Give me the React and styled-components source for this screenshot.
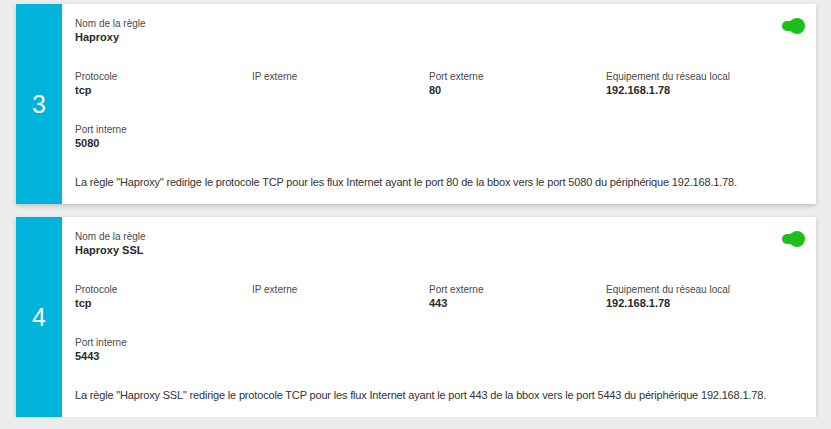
import React from "react";
import styled, { createGlobalStyle } from "styled-components";

const GlobalStyle = createGlobalStyle`
  body {
    margin: 0;
    background-color: #ececec;
    font-family: "Liberation Sans", Arial, sans-serif;
  }
`;

const Page = styled.div`
  padding: 4px 15px 0 16px;
  display: flex;
  flex-direction: column;
  gap: 13px;
`;

const Card = styled.div`
  position: relative;
  display: flex;
  width: 800px;
  min-height: 200px;
  background-color: #fff;
  box-shadow: 0 2px 4px rgba(0, 0, 0, 0.18);
`;

const Index = styled.div`
  width: 46px;
  flex-shrink: 0;
  background-color: #00b3da;
  color: #fff;
  font-size: 25px;
  display: flex;
  align-items: center;
  justify-content: center;
`;

const Body = styled.div`
  flex: 1;
  padding: 13px 13px 15px 13px;
`;

const Grid = styled.div`
  display: grid;
  grid-template-columns: repeat(4, 177px);
`;

const Field = styled.div`
  margin-bottom: 26px;
  grid-column: ${(p) => (p.$full ? "1 / -1" : "auto")};
`;

const Label = styled.div`
  font-size: 10px;
  line-height: 13px;
  color: #4a4a4a;
`;

const Value = styled.div`
  font-size: 11px;
  line-height: 14px;
  font-weight: bold;
  color: #2a2a2a;
  min-height: 14px;
`;

const Description = styled.p`
  margin: 0;
  font-size: 11px;
  line-height: 13px;
  letter-spacing: -0.17px;
  color: #333;
`;

const Toggle = styled.div`
  position: absolute;
  top: 17px;
  right: 17px;
  width: 17px;
  height: 10px;
  border-radius: 5px;
  background-color: #1cbf1c;

  &::after {
    content: "";
    position: absolute;
    right: -6px;
    top: -3px;
    width: 16px;
    height: 16px;
    border-radius: 50%;
    background-color: #1cbf1c;
  }
`;

const rules = [
  { id: 3, name: "Haproxy", proto: "tcp", ipExt: "", portExt: "80", device: "192.168.1.78", portInt: "5080" },
  { id: 4, name: "Haproxy SSL", proto: "tcp", ipExt: "", portExt: "443", device: "192.168.1.78", portInt: "5443" },
];

function RuleCard({ rule }) {
  return (
    <Card>
      <Index>{rule.id}</Index>
      <Body>
        <Grid>
          <Field $full>
            <Label>Nom de la règle</Label>
            <Value>{rule.name}</Value>
          </Field>
          <Field>
            <Label>Protocole</Label>
            <Value>{rule.proto}</Value>
          </Field>
          <Field>
            <Label>IP externe</Label>
            <Value>{rule.ipExt}</Value>
          </Field>
          <Field>
            <Label>Port externe</Label>
            <Value>{rule.portExt}</Value>
          </Field>
          <Field>
            <Label>Equipement du réseau local</Label>
            <Value>{rule.device}</Value>
          </Field>
          <Field $full>
            <Label>Port interne</Label>
            <Value>{rule.portInt}</Value>
          </Field>
        </Grid>
        <Description>
          La règle "{rule.name}" redirige le protocole TCP pour les flux Internet ayant le port {rule.portExt} de la
          bbox vers le port {rule.portInt} du périphérique {rule.device}.
        </Description>
      </Body>
      <Toggle />
    </Card>
  );
}

export default function App() {
  return (
    <>
      <GlobalStyle />
      <Page>
        {rules.map((r) => (
          <RuleCard key={r.id} rule={r} />
        ))}
      </Page>
    </>
  );
}
